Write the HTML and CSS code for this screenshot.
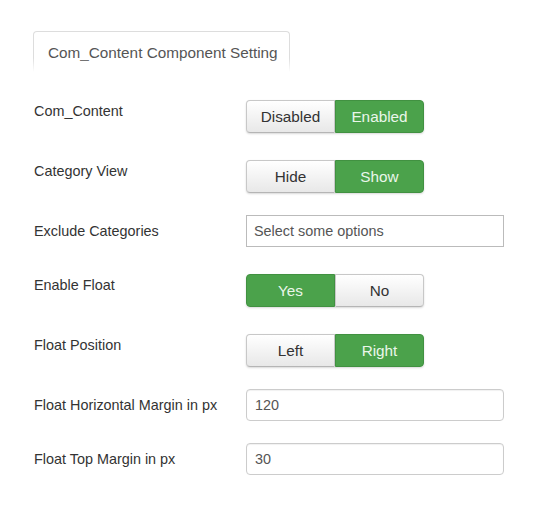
FILE: index.html
```html
<!DOCTYPE html>
<html>
<head>
<meta charset="utf-8">
<link rel="stylesheet" href="styles.css">
</head>
<body>
<div class="page">
  <div class="tabs">
    <div class="tab">Com_Content Component Setting</div>
  </div>
  <div class="form">
    <div class="row">
      <div class="label">Com_Content</div>
      <div class="btn-group">
        <span class="btn">Disabled</span><span class="btn on">Enabled</span>
      </div>
    </div>
    <div class="row">
      <div class="label">Category View</div>
      <div class="btn-group">
        <span class="btn">Hide</span><span class="btn on">Show</span>
      </div>
    </div>
    <div class="row">
      <div class="label">Exclude Categories</div>
      <div class="select">Select some options</div>
    </div>
    <div class="row">
      <div class="label">Enable Float</div>
      <div class="btn-group">
        <span class="btn on">Yes</span><span class="btn">No</span>
      </div>
    </div>
    <div class="row">
      <div class="label">Float Position</div>
      <div class="btn-group">
        <span class="btn">Left</span><span class="btn on">Right</span>
      </div>
    </div>
    <div class="row">
      <div class="label">Float Horizontal Margin in px</div>
      <div class="input">120</div>
    </div>
    <div class="row">
      <div class="label">Float Top Margin in px</div>
      <div class="input">30</div>
    </div>
  </div>
</div>
</body>
</html>
```
FILE: styles.css
```css
html, body {
  margin: 0;
  padding: 0;
  background: #fff;
}
.page {
  padding: 31px 0 0 33px;
  font-family: "Liberation Sans", Arial, sans-serif;
  color: #333;
}
.tabs {
  display: flex;
}
.tab {
  position: relative;
  width: 257px;
  box-sizing: border-box;
  height: 41px;
  padding: 12px 0 0 14px;
  font-size: 15.3px;
  line-height: 18px;
  color: #555;
  border: 1px solid #ddd;
  border-bottom: none;
  border-radius: 4px 4px 0 0;
}
.tab::after {
  content: "";
  position: absolute;
  left: -1px;
  right: -1px;
  bottom: 0;
  height: 14px;
  background: linear-gradient(rgba(255,255,255,0), #fff);
}
.form {
  padding-top: 23px;
}
.row {
  display: flex;
  align-items: flex-start;
  margin-bottom: 22px;
}
.label {
  width: 212px;
  padding-left: 1px;
  font-size: 14.4px;
  line-height: 32px;
  color: #333;
}
.btn-group {
  display: flex;
  margin-top: 5px;
  border-radius: 4px;
  box-shadow: 0 1px 2px rgba(0,0,0,0.15);
}
.btn {
  width: 89px;
  height: 33px;
  box-sizing: border-box;
  text-align: center;
  font-size: 15.3px;
  line-height: 31px;
  color: #333;
  background: linear-gradient(#ffffff, #e8e8e8);
  border: 1px solid #c8c8c8;
  border-bottom-color: #b5b5b5;
}
.btn:first-child {
  border-radius: 4px 0 0 4px;
}
.btn:last-child {
  border-radius: 0 4px 4px 0;
}
.btn.on {
  background: #4ba24b;
  border-color: #419141;
  color: #eaf6ea;
}
.select,
.input {
  width: 258px;
  height: 32px;
  box-sizing: border-box;
  border: 1px solid #ccc;
  font-size: 14.4px;
  line-height: 30px;
  color: #555;
  padding-left: 8px;
}
.select {
  border-color: #bbb;
  border-radius: 0;
  padding-left: 7px;
}
.input {
  border-radius: 4px;
  box-shadow: inset 0 1px 1px rgba(0,0,0,0.06);
}
```
